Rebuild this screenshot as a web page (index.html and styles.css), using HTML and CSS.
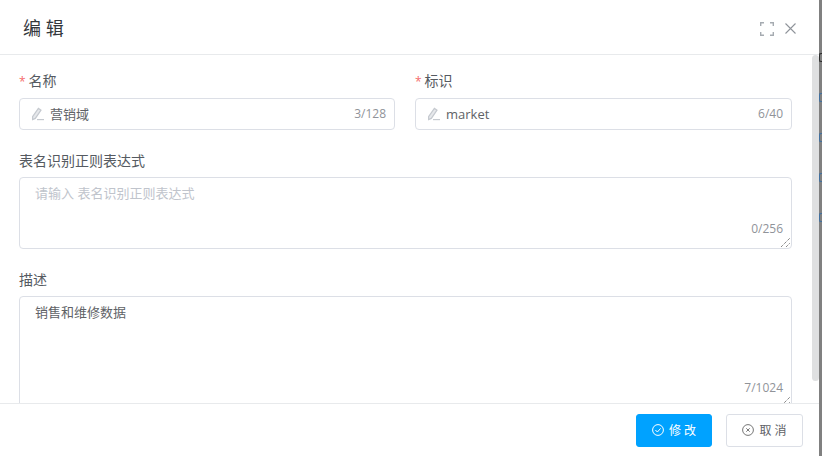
FILE: index.html
```html
<!DOCTYPE html>
<html lang="zh-CN">

<head>
  <meta charset="UTF-8" />
  <title>编辑</title>
  <link rel="stylesheet" href="styles.css">
</head>

<body>
  <div class="backdrop">
    <i class="mark mark-dark"></i>
    <i class="mark"></i>
    <i class="mark"></i>
    <i class="mark"></i>
    <i class="mark"></i>
  </div>
  <div class="dialog">
    <div class="dialog-header">
      <span class="dialog-title">编 辑</span>
      <div class="header-tools">
        <svg width="14" height="14" viewBox="0 0 14 14" fill="none" stroke="#a6abb1" stroke-width="1.4">
          <path d="M0.7 4V0.7H4M10 0.7H13.3V4M13.3 10V13.3H10M4 13.3H0.7V10" />
        </svg>
        <svg width="11" height="11" viewBox="0 0 11 11" fill="none" stroke="#8f949a" stroke-width="1.1">
          <path d="M0.5 0.5L10.5 10.5M10.5 0.5L0.5 10.5" />
        </svg>
      </div>
    </div>
    <div class="dialog-body">
      <div class="form">
        <div class="row">
          <div class="field">
            <label class="label"><em>*</em>名称</label>
            <div class="input">
              <svg class="pen" width="14" height="14" viewBox="0 0 14 14" fill="#e6e8eb" stroke="#c5c9cf" stroke-width="1.2">
                <path d="M1.6 9.6L7.4 1.4L10 3.2L4.3 11.4L1.6 12.6Z" />
                <path d="M6 12.6H13" fill="none" />
              </svg>
              <span class="value">营销域</span>
              <span class="count">3/128</span>
            </div>
          </div>
          <div class="field">
            <label class="label"><em>*</em>标识</label>
            <div class="input">
              <svg class="pen" width="14" height="14" viewBox="0 0 14 14" fill="#e6e8eb" stroke="#c5c9cf" stroke-width="1.2">
                <path d="M1.6 9.6L7.4 1.4L10 3.2L4.3 11.4L1.6 12.6Z" />
                <path d="M6 12.6H13" fill="none" />
              </svg>
              <span class="value">market</span>
              <span class="count">6/40</span>
            </div>
          </div>
        </div>
        <div class="field">
          <label class="label">表名识别正则表达式</label>
          <div class="area">
            <span class="placeholder">请输入 表名识别正则表达式</span>
            <span class="count area-count">0/256</span>
            <svg class="grip" width="11" height="11" viewBox="0 0 11 11" stroke="#555" stroke-width="1" stroke-dasharray="1 1">
              <path d="M1 10L10 1M6 10L10 6" />
            </svg>
          </div>
        </div>
        <div class="field">
          <label class="label">描述</label>
          <div class="area area-tall">
            <span class="area-text">销售和维修数据</span>
            <span class="count area-count">7/1024</span>
            <svg class="grip" width="11" height="11" viewBox="0 0 11 11" stroke="#555" stroke-width="1" stroke-dasharray="1 1">
              <path d="M1 10L10 1M6 10L10 6" />
            </svg>
          </div>
        </div>
      </div>
      <div class="scrollbar"><div class="thumb"></div></div>
    </div>
    <div class="dialog-footer">
      <button class="btn btn-primary">
        <svg width="12" height="12" viewBox="0 0 12 12" fill="none" stroke="#fff" stroke-width="1">
          <circle cx="6" cy="6" r="5.4" />
          <path d="M3.4 6L5.4 8L8.6 4.4" />
        </svg>
        修 改
      </button>
      <button class="btn btn-cancel">
        <svg width="12" height="12" viewBox="0 0 12 12" fill="none" stroke="#777" stroke-width="1">
          <circle cx="6" cy="6" r="5.4" />
          <path d="M4.3 4.3L7.7 7.7M7.7 4.3L4.3 7.7" />
        </svg>
        取 消
      </button>
    </div>
  </div>
</body>

</html>
```

FILE: styles.css
```css
* {
  box-sizing: border-box;
}

html,
body {
  margin: 0;
  height: 100%;
  overflow: hidden;
}

body {
  display: flex;
  background-color: #808080;
  font-family: "Open Sans", "Noto Sans CJK SC", sans-serif;
  font-size: 13px;
  color: #555a61;
}

.dialog {
  width: 819px;
  height: 456px;
  display: flex;
  flex-direction: column;
  background-color: #fff;
}

.dialog-header {
  height: 55px;
  flex: none;
  display: flex;
  align-items: center;
  justify-content: space-between;
  padding: 0 23px;
  border-bottom: 1px solid #e8eaec;
}

.dialog-title {
  font-size: 18px;
  color: #33373c;
}

.header-tools {
  display: flex;
  align-items: center;
  gap: 11px;
  margin-top: 3px;
}

.dialog-body {
  flex: 1;
  min-height: 0;
  display: flex;
  overflow: hidden;
}

.form {
  flex: 1;
  display: flex;
  flex-direction: column;
  padding: 16px 20px 0 19px;
}

.row {
  display: grid;
  grid-template-columns: 376px 377px;
  gap: 20px;
}

.field {
  flex: none;
  margin-bottom: 21px;
}

.label {
  display: block;
  height: 26px;
  font-size: 14px;
  line-height: 20px;
  color: #555a61;
}

.row .label {
  height: 27px;
}

.label em {
  font-size: 12px;
  font-style: normal;
  color: #f56c6c;
  margin-right: 3px;
}

.input {
  height: 32px;
  display: flex;
  align-items: center;
  padding: 0 8px 0 11px;
  border: 1px solid #dcdfe6;
  border-radius: 4px;
  line-height: 30px;
}

.pen {
  flex: none;
  margin-right: 5px;
}

.value {
  flex: 1;
  color: #606266;
}

.count {
  font-size: 12px;
  color: #909399;
}

.area {
  position: relative;
  height: 72px;
  padding: 5px 15px;
  border: 1px solid #dcdfe6;
  border-radius: 4px;
  line-height: 20px;
}

.area-tall {
  height: 112px;
}

.placeholder {
  color: #c0c4cc;
}

.area-text {
  color: #606266;
}

.area-count {
  position: absolute;
  right: 8px;
  bottom: 9px;
}

.grip {
  position: absolute;
  right: 0;
  bottom: 0;
}

.scrollbar {
  width: 7px;
  flex: none;
}

.thumb {
  height: 326px;
  border-radius: 4px;
  background-color: #dfe0e1;
}

.dialog-footer {
  height: 53px;
  flex: none;
  display: flex;
  justify-content: flex-end;
  align-items: center;
  gap: 14px;
  padding-right: 16px;
  border-top: 1px solid #e8eaec;
  background-color: #fff;
}

.btn {
  height: 33px;
  display: flex;
  align-items: center;
  justify-content: center;
  gap: 5px;
  padding: 0;
  border: 1px solid #dcdfe6;
  border-radius: 3px;
  background-color: #fff;
  color: #606266;
  font: inherit;
  font-size: 12px;
}

.btn-primary {
  width: 76px;
  border-color: #00a2ff;
  background-color: #00a2ff;
  color: #fff;
}

.btn-cancel {
  width: 77px;
}

.backdrop {
  position: absolute;
  top: 0;
  right: 0;
  width: 3px;
  height: 456px;
  padding-top: 53px;
}

.mark {
  display: block;
  height: 9px;
  margin-bottom: 31px;
  border: 1px solid #3f6f9f;
  border-right: 0;
  border-radius: 2px 0 0 2px;
}

.mark-dark {
  border-color: #2b2b2b;
}
```
